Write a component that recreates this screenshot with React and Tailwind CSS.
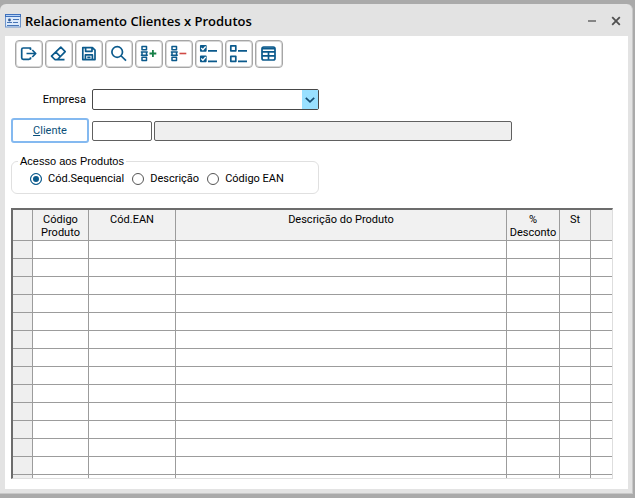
import React, { useState } from 'react';

const svgProps = {
  width: 26,
  height: 26,
  viewBox: '0 0 26 26',
  fill: 'none',
  stroke: '#0b5a8c',
  strokeWidth: 1.7,
  strokeLinejoin: 'round',
  'aria-hidden': true,
};

const ExitIcon = () => (
  <svg {...svgProps}>
    <path d="M14.5 9V7.2L12.8 7H7.2a1.5 1.5 0 0 0-1.5 1.5v8.3a1.5 1.5 0 0 0 1.5 1.5h5.8l1.5-.6v-1.4M10.5 12.5h9M16.3 9l3.4 3.5-3.4 3.5" />
  </svg>
);

const EraserIcon = () => (
  <svg {...svgProps}>
    <path d="M14.8 6.2l4.4 4.5-7.7 7.8H8.8l-3.3-3.3zM9.8 11.2l4.6 4.4M8.8 18.7h9.7" />
  </svg>
);

const SaveIcon = () => (
  <svg {...svgProps}>
    <path d="M6.8 6.6h9.6l2.6 2.6v9.4H6.8zM9.6 6.8v3.5h6.4V6.8M9.4 18.5v-4.6h7v4.6M11.3 16.3h3.2" />
  </svg>
);

const SearchIcon = () => (
  <svg {...svgProps}>
    <circle cx="11.2" cy="11" r="5.3" />
    <path d="M15.2 15l4.8 4.7" />
  </svg>
);

const AddRowIcon = () => (
  <svg {...svgProps} strokeWidth="1.5">
    <path d="M6 5.5h4.5v3.2H6zM6 16.3h4.5v3.2H6zM6 11h4.5v3.2H6zM4.8 11h7M4.8 14.2h7" />
    <path stroke="#178048" strokeWidth="1.8" d="M13.5 12.5h6.8M16.9 9.1v6.8" />
  </svg>
);

const RemoveRowIcon = () => (
  <svg {...svgProps} strokeWidth="1.5">
    <path d="M6 5.5h4.5v3.2H6zM6 16.3h4.5v3.2H6zM6 11h4.5v3.2H6zM4.8 11h7M4.8 14.2h7" />
    <path stroke="#d04a45" strokeWidth="1.6" d="M13.5 12.5h6.8" />
  </svg>
);

const CheckAllIcon = () => (
  <svg {...svgProps} strokeWidth="1.7">
    <path fill="#0b5a8c" d="M4.8 4.8h5v5h-5zM4.8 15.3h5v5h-5z" />
    <path stroke="#fff" strokeWidth="1.3" d="M5.2 7l1.7 1.7 2.8-3.2M5.2 17.5l1.7 1.7 2.8-3.2" />
    <path d="M12 9.8h9M12 20.3h9" />
  </svg>
);

const UncheckAllIcon = () => (
  <svg {...svgProps} strokeWidth="1.7">
    <path d="M4.8 4.8h5v5h-5zM4.8 15.3h5v5h-5zM12 9.8h9M12 20.3h9" />
  </svg>
);

const GridIcon = () => (
  <svg {...svgProps}>
    <rect x="6" y="6" width="13" height="13" rx="1.8" />
    <path strokeWidth="2" d="M6 7.5h13" />
    <path d="M6 10.8h13M6 14.8h13M12.5 10.8v8" />
  </svg>
);

const tools = [
  { label: 'Sair', icon: ExitIcon },
  { label: 'Limpar', icon: EraserIcon },
  { label: 'Salvar', icon: SaveIcon },
  { label: 'Pesquisar', icon: SearchIcon },
  { label: 'Incluir linha', icon: AddRowIcon },
  { label: 'Excluir linha', icon: RemoveRowIcon },
  { label: 'Marcar todos', icon: CheckAllIcon },
  { label: 'Desmarcar todos', icon: UncheckAllIcon },
  { label: 'Tabela', icon: GridIcon },
];

const accessModes = ['Cód.Sequencial', 'Descrição', 'Código EAN'];

const columns = [
  { name: '', width: 'w-5' },
  { name: 'Código Produto', width: 'w-14' },
  { name: 'Cód.EAN', width: 'w-[87px]' },
  { name: 'Descrição do Produto', width: '' },
  { name: '% Desconto', width: 'w-[53px]' },
  { name: 'St', width: 'w-[31px]' },
  { name: '', width: 'w-[21px]' },
];

const TitleBar = () => (
  <header className="flex h-8 shrink-0 items-center pt-0.5">
    <svg width="16" height="14" viewBox="0 0 16 14" aria-hidden="true">
      <rect x="0.5" y="0.5" width="15" height="12.5" fill="#dceafb" stroke="#6d94cb" />
      <path fill="#3e70bd" d="M0 0h16v3H0z" />
      <path fill="#b6d3f5" d="M1 1h14v1H1z" />
      <circle cx="4.5" cy="6" r="1.4" fill="#34588f" />
      <path stroke="#4774b4" d="M2 8.5h5M8 5.5h6M8 8.5h5M2 11.5h12" />
    </svg>
    <h1 className="ml-1 flex-1 truncate font-['Open_Sans',sans-serif] text-[13px] leading-5 font-semibold text-black">
      Relacionamento Clientes x Produtos
    </h1>
    <button type="button" aria-label="Minimizar" className="flex h-6 w-6 items-center justify-center">
      <svg width="10" height="10" viewBox="0 0 10 10" aria-hidden="true">
        <path stroke="#858585" strokeWidth="2" d="M1 5h8" />
      </svg>
    </button>
    <button type="button" aria-label="Fechar" className="flex h-6 w-6 items-center justify-center">
      <svg width="10" height="10" viewBox="0 0 10 10" aria-hidden="true">
        <path stroke="#505050" strokeWidth="1.8" d="M1.2 1.2l7.6 7.6M8.8 1.2L1.2 8.8" />
      </svg>
    </button>
  </header>
);

const Toolbar = () => (
  <div className="flex gap-0.5 pl-2.5">
    {tools.map(({ label, icon: Icon }) => (
      <button
        key={label}
        type="button"
        aria-label={label}
        className="flex h-7 w-7 items-center justify-center rounded-sm border border-[#a6a6a6] bg-white ring-1 ring-[#d8d8d8] ring-inset"
      >
        <Icon />
      </button>
    ))}
  </div>
);

const ProductGrid = () => (
  <div className="mt-3.5 mr-[15px] mb-2.5 ml-1.5 min-h-0 flex-1 overflow-hidden border-t-2 border-r border-b border-l-2 border-t-[#6c6c6c] border-r-[#dedede] border-b-[#dedede] border-l-[#6c6c6c]">
    <table className="w-full table-fixed border-separate border-spacing-0 text-center leading-[13px]">
      <thead>
        <tr>
          {columns.map((col, i) => (
            <th
              key={i}
              scope="col"
              className={`h-[31px] border-r border-b border-[#9c9c9c] bg-[#f1f1f1] px-0 pt-[3px] align-top font-normal last:border-r-0 ${col.width}`}
            >
              {col.name}
            </th>
          ))}
        </tr>
      </thead>
      <tbody>
        {Array.from({ length: 14 }, (_, row) => (
          <tr key={row}>
            {columns.map((col, i) => (
              <td
                key={i}
                className="h-[18px] border-r border-b border-[#9c9c9c] p-0 first:bg-[#efefef] last:border-r-0"
              />
            ))}
          </tr>
        ))}
      </tbody>
    </table>
  </div>
);

const App = () => {
  const [mode, setMode] = useState(accessModes[0]);

  return (
    <div className="h-screen bg-[#aaaaaa] pt-1 pr-0.5 pb-1 font-[Roboto,sans-serif] text-[11px] text-black">
      <div className="flex h-full flex-col rounded-t-md border-r border-b border-[#c8c8c8] bg-[#e3e3e3] pr-1 pb-1 pl-[5px]">
        <TitleBar />
        <main className="flex min-h-0 flex-1 flex-col bg-white pt-1">
          <Toolbar />

          <div className="mt-[21px] flex items-center">
            <label htmlFor="empresa" className="w-[81px] text-right leading-4">
              Empresa
            </label>
            <div className="relative ml-1.5 w-[227px]">
              <select
                id="empresa"
                className="block h-[21px] w-full appearance-none rounded-xs border border-[#484848] bg-white px-1"
              >
                <option></option>
              </select>
              <span className="pointer-events-none absolute inset-y-px right-px flex w-4 items-center justify-center bg-[#99e0ff]">
                <svg width="10" height="6" viewBox="0 0 10 6" fill="none" aria-hidden="true">
                  <path stroke="#164c70" strokeWidth="1.7" d="M0.8 0.8L5 4.8l4.2-4" />
                </svg>
              </span>
            </div>
          </div>

          <div className="mt-2 flex items-center pl-1.5">
            <button
              type="button"
              className="h-[25px] w-[78px] rounded-[3px] border-2 border-[#84b9f0] bg-white leading-4 text-[#0b4f78]"
            >
              <u>C</u>liente
            </button>
            <input
              aria-label="Código do cliente"
              className="ml-[3px] h-5 w-[60px] rounded-xs border border-[#606060] bg-white px-1"
            />
            <input
              aria-label="Nome do cliente"
              readOnly
              className="ml-0.5 h-5 w-[358px] rounded-xs border border-[#606060] bg-[#efefef] px-1"
            />
          </div>

          <fieldset className="mt-2.5 ml-1.5 w-[308px] rounded-md border border-[#e0e0e0] pt-0.5 pr-2 pb-1.5 pl-1.5">
            <legend className="px-0.5 font-['Liberation_Sans',sans-serif] text-[11px] leading-4">
              Acesso aos Produtos
            </legend>
            <div className="flex gap-2 pl-3">
              {accessModes.map((name) => (
                <label key={name} className="flex items-center gap-1.5 leading-4 whitespace-nowrap">
                  <input
                    type="radio"
                    name="acesso"
                    checked={mode === name}
                    onChange={() => setMode(name)}
                    className="h-3 w-3 appearance-none rounded-full border border-[#555555] bg-white checked:border-[#0b5a8c] checked:bg-[#0b5a8c] checked:ring-2 checked:ring-white checked:ring-inset"
                  />
                  {name}
                </label>
              ))}
            </div>
          </fieldset>

          <ProductGrid />
        </main>
      </div>
    </div>
  );
};

export default App;
